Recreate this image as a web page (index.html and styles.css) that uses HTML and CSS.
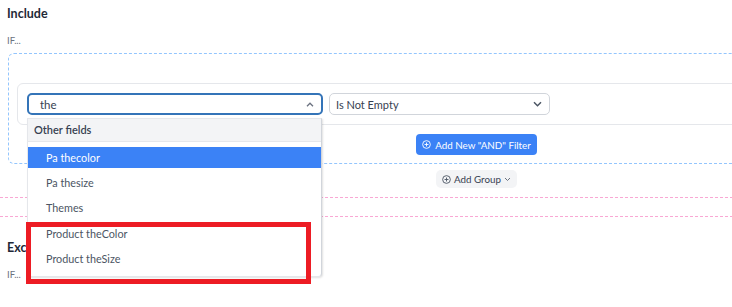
FILE: index.html
```html
<!DOCTYPE html>
<html lang="en">

<head>
  <meta charset="UTF-8">
  <meta name="viewport" content="width=device-width, initial-scale=1.0">
  <title>Segment filters</title>
  <link rel="stylesheet" href="styles.css">
</head>

<body>
  <div class="viewport">
    <div class="page">
      <h2 class="section-title">Include</h2>
      <p class="if-label">IF...</p>

      <div class="group">
        <div class="rule">
          <div class="select select-open">
            <span>the</span>
            <svg width="8" height="5" viewBox="0 0 8 5"><path d="M1 4.2l3-3 3 3" fill="none" stroke="#6b7280" stroke-width="1.3"/></svg>
          </div>
          <div class="select select-op">
            <span>Is Not Empty</span>
            <svg width="9" height="6" viewBox="0 0 9 6"><path d="M1 1.2l3.5 3.5L8 1.2" fill="none" stroke="#4b5563" stroke-width="1.5"/></svg>
          </div>
        </div>
        <div class="center-row">
          <button class="btn-and">
            <svg width="9" height="9" viewBox="0 0 10 10"><circle cx="5" cy="5" r="4.3" fill="none" stroke="#fff" stroke-width="1"/><path d="M5 2.8v4.4M2.8 5h4.4" stroke="#fff" stroke-width="1"/></svg>
            Add New "AND" Filter
          </button>
        </div>
      </div>

      <div class="center-row">
        <button class="btn-group">
          <svg width="9" height="9" viewBox="0 0 10 10"><circle cx="5" cy="5" r="4.3" fill="none" stroke="#4b5563" stroke-width="1"/><path d="M5 2.8v4.4M2.8 5h4.4" stroke="#4b5563" stroke-width="1"/></svg>
          Add Group
          <svg width="7" height="5" viewBox="0 0 7 5"><path d="M1 1l2.5 2.5L6 1" fill="none" stroke="#6b7280" stroke-width="1"/></svg>
        </button>
      </div>

      <div class="divider"></div>

      <h2 class="section-title exclude">Exclude</h2>
      <p class="if-label">IF...</p>

      <div class="dropdown">
        <div class="dropdown-head">Other fields</div>
        <div class="option active">Pa thecolor</div>
        <div class="option">Pa thesize</div>
        <div class="option">Themes</div>
        <div class="option">Product theColor</div>
        <div class="option">Product theSize</div>
      </div>

      <div class="highlight"></div>
    </div>
  </div>
</body>

</html>
```

FILE: styles.css
```css
body {
  margin: 0;
  font-family: Lato, "Noto Sans", sans-serif;
  color: #1f2937;
}

h2,
p {
  margin: 0;
  padding: 0;
}

.viewport {
  width: 100vw;
  height: 100vh;
  overflow: hidden;
}

.page {
  position: relative;
  width: 953px;
  padding-top: 6px;
}

.section-title {
  font-size: 12.5px;
  font-weight: 700;
  line-height: 16px;
  padding-left: 7px;
  color: #1f2937;
}

.if-label {
  font-size: 9.5px;
  line-height: 12px;
  color: #6b7280;
  padding-left: 7px;
  margin-top: 13px;
}

.group {
  margin: 6px 8px 0;
  border: 1px dashed #93c5fd;
  border-radius: 6px;
  padding: 29px 0 8px 8px;
}

.rule {
  display: flex;
  gap: 6px;
  border: 1px solid #e5e7eb;
  border-radius: 6px;
  padding: 9px 9px;
  margin-right: -20px;
}

.select {
  display: flex;
  align-items: center;
  justify-content: space-between;
  box-sizing: border-box;
  height: 22px;
  border: 1px solid #d1d5db;
  border-radius: 5px;
  padding: 0 7px 0 6px;
  font-size: 11px;
  color: #374151;
  background: #fff;
}

.select-open {
  width: 296px;
  border: 2px solid #3474b8;
  padding-left: 11px;
  font-size: 11.5px;
}

.select-op {
  width: 221px;
}

.center-row {
  display: flex;
  justify-content: center;
}

.group .center-row {
  margin-top: 9px;
  margin-right: 8px;
}

button {
  font-family: inherit;
  display: flex;
  align-items: center;
  gap: 4px;
  border: 0;
  cursor: pointer;
}

.btn-and {
  height: 21px;
  padding: 0 6px;
  border-radius: 4px;
  background: #3b82f6;
  color: #fff;
  font-size: 9.8px;
}

.btn-group {
  margin-top: 6px;
  height: 18px;
  padding: 0 6px;
  gap: 3px;
  border-radius: 5px;
  background: #f3f4f6;
  color: #374151;
  font-size: 9.8px;
}

.divider {
  margin-top: 9px;
  height: 18px;
  border-top: 1px dashed #f9a8d4;
  border-bottom: 1px dashed #f9a8d4;
}

.exclude {
  margin-top: 23px;
}

.exclude + .if-label {
  margin-top: 13px;
}

.dropdown {
  position: absolute;
  left: 27px;
  top: 118px;
  width: 295px;
  height: 159px;
  box-sizing: border-box;
  background: #fff;
  border: 1px solid #e5e7eb;
  border-right-color: #d1d5db;
  border-radius: 0 0 4px 4px;
  box-shadow: 1px 1px 2px rgba(0, 0, 0, 0.12);
  overflow: hidden;
}

.dropdown-head {
  height: 22px;
  line-height: 22px;
  padding-left: 6px;
  background: #f3f4f6;
  border-bottom: 1px solid #e5e7eb;
  font-size: 11px;
  font-weight: 600;
  color: #374151;
}

.option {
  height: 21px;
  line-height: 21px;
  margin-bottom: 4.4px;
  padding-left: 18px;
  font-size: 10.8px;
  color: #4b5563;
}

.option.active {
  margin-top: 4.5px;
  background: #3b82f6;
  color: #fff;
}

.highlight {
  position: absolute;
  left: 26px;
  top: 222px;
  width: 285px;
  height: 62px;
  box-sizing: border-box;
  border: 5px solid #ed1c24;
}
```
